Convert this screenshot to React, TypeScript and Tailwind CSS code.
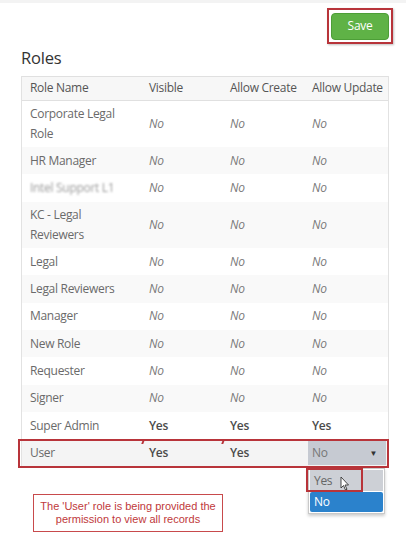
import React from "react";

type Row = { name: string; lines?: 2; vals: [string, string, string]; blur?: boolean };

const rows: Row[] = [
  { name: "Corporate Legal Role", lines: 2, vals: ["No", "No", "No"] },
  { name: "HR Manager", vals: ["No", "No", "No"] },
  { name: "Intel Support L1", vals: ["No", "No", "No"], blur: true },
  { name: "KC - Legal Reviewers", lines: 2, vals: ["No", "No", "No"] },
  { name: "Legal", vals: ["No", "No", "No"] },
  { name: "Legal Reviewers", vals: ["No", "No", "No"] },
  { name: "Manager", vals: ["No", "No", "No"] },
  { name: "New Role", vals: ["No", "No", "No"] },
  { name: "Requester", vals: ["No", "No", "No"] },
  { name: "Signer", vals: ["No", "No", "No"] },
  { name: "Super Admin", vals: ["Yes", "Yes", "Yes"] },
];

function Val({ v }: { v: string }) {
  return v === "Yes" ? (
    <span className="font-semibold text-[#4a4a4a]">Yes</span>
  ) : (
    <span className="italic text-[#7a7a7a]">No</span>
  );
}

const grid = "grid grid-cols-[119px_81px_82px_86px] items-center";

export default function App() {
  return (
    <div
      className="w-[406px] h-[550px] bg-white relative overflow-hidden"
      style={{ fontFamily: '"Open Sans", "Noto Sans", sans-serif' }}
    >
      <div className="h-[3px] bg-[#f3f3f3]" />
      <div className="flex justify-end pr-[13px] pt-[5px]">
        <div className="border-2 border-[#b8343a] p-[2px] shadow-[1px_1px_2px_rgba(0,0,0,0.25)]">
          <button className="w-[58px] h-[27px] rounded-[4px] bg-[#5fb246] text-white text-[12px] tracking-[-0.3px] leading-none border border-[#4d9e37]">
            Save
          </button>
        </div>
      </div>
      <div className="pl-[21px] pt-[2px] text-[16.5px] leading-[24px] text-[#333] tracking-[-0.2px]">Roles</div>
      <div className="ml-[21px] mt-[6px] w-[368px] border-x border-[#e2e2e2] text-[12px] tracking-[-0.3px] leading-[20px]">
        <div className={`${grid} h-[25px] bg-[#f7f7f7] border-y border-[#e0e0e0] text-[#555]`}>
          <div className="pl-[8px]">Role Name</div>
          <div className="pl-[8px]">Visible</div>
          <div className="pl-[8px]">Allow Create</div>
          <div className="pl-[8px] whitespace-nowrap">Allow Update</div>
        </div>
        {rows.map((r, i) => (
          <div
            key={r.name}
            className={`${grid} ${r.lines === 2 ? "h-[46.5px]" : "h-[27.3px]"} ${
              i % 2 === 1 ? "bg-[#f9f9f9]" : "bg-white"
            }`}
          >
            <div className={`pl-[8px] pr-[14px] text-[#6a6a6a] ${r.blur ? "blur-[1.2px] text-[#9a9a9a]" : ""}`}>
              {r.name}
            </div>
            {r.vals.map((v, j) => (
              <div key={j} className="pl-[8px]">
                <Val v={v} />
              </div>
            ))}
          </div>
        ))}
        <div className={`${grid} h-[28px] bg-[#f4f4f4] relative`}>
          <div className="pl-[8px] text-[#6a6a6a]">User</div>
          <div className="pl-[8px]"><Val v="Yes" /></div>
          <div className="pl-[8px]"><Val v="Yes" /></div>
          <div className="pl-[4px]">
            <div className="w-[78px] h-[24px] bg-[#c6cad2] flex items-center justify-between pl-[4px] pr-[9px] text-[#777]">
              <span>No</span>
              <span className="text-[8px] text-[#333]">▼</span>
            </div>
          </div>
          <div className="absolute left-[-4px] right-[-1px] top-0 bottom-[-1px] border-2 border-[#b8343a] pointer-events-none" />
          <div className="absolute left-[120px] top-[1px] w-[2px] h-[4px] bg-[#b8343a] skew-x-[-20deg]" />
          <div className="absolute left-[200px] top-[1px] w-[2px] h-[4px] bg-[#b8343a] skew-x-[-20deg]" />
          {/* dropdown list */}
          <div className="absolute left-[286px] top-[29px] w-[77px] bg-white border border-[#c9c9c9] shadow-[0_2px_3px_rgba(0,0,0,0.2)] p-[1px]">
            <div className="h-[21px] bg-[#cdd0d6] pl-[4px] text-[#666] flex items-center relative">
              Yes
              <svg className="absolute left-[30px] top-[6px]" width="10" height="15" viewBox="0 0 10 15">
                <path d="M1 1 L1 12 L3.5 9.5 L5.5 14 L7 13.3 L5 9 L8.5 9 Z" fill="#fff" stroke="#333" strokeWidth="0.9" strokeLinejoin="round" />
              </svg>
            </div>
            <div className="h-[20px] mt-[1px] bg-[#2b82cc] rounded-[2px] pl-[4px] text-white flex items-center">No</div>
            <div className="absolute left-[-3px] top-[-1px] w-[57px] h-[24px] border-2 border-[#b8343a]" />
          </div>
        </div>
      </div>
      <div
        className="absolute left-[33px] top-[494px] w-[190px] h-[38px] border-[1.5px] border-[#c84a4c] flex flex-col items-center justify-center text-[11px] leading-[13px] text-[#c0393b]"
        style={{ fontFamily: '"Liberation Sans", Arial, sans-serif' }}
      >
        <div>The 'User' role is being provided the</div>
        <div>permission to view all records</div>
      </div>
    </div>
  );
}
